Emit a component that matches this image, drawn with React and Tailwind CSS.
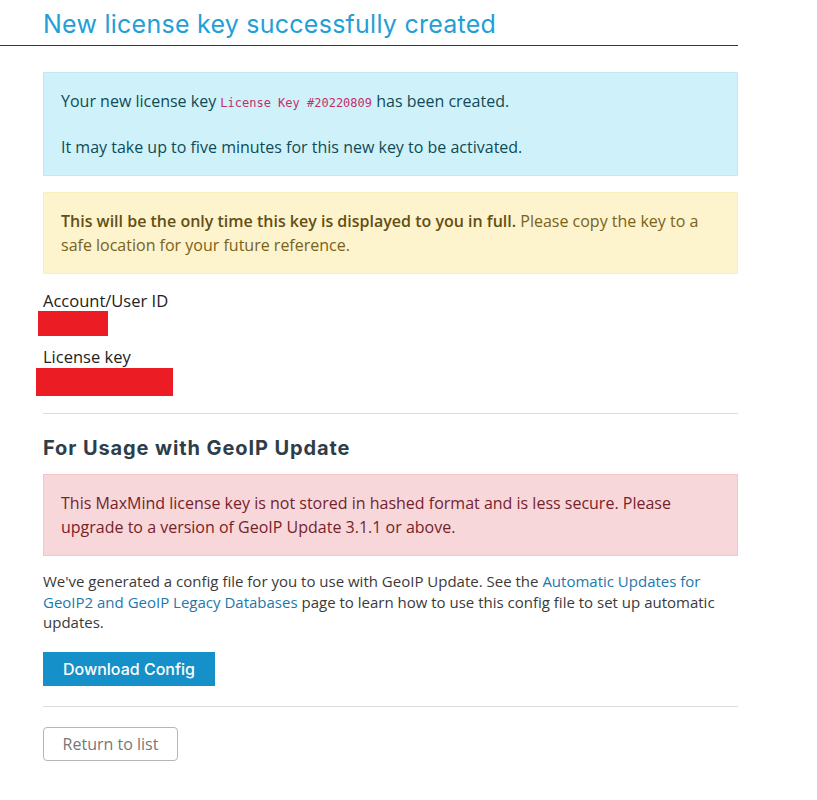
export default function App() {
  return (
    <div className="w-[817px] min-h-[800px] bg-white font-['Open_Sans',sans-serif] text-[#333]">
      <div className="w-[738px] border-b border-[#2d3e4a] pt-[7px] pb-[4px]">
        <h1 className="pl-[43px] font-['Inter',sans-serif] text-[25px] leading-[34px] text-[#239fd7] tracking-[0.25px]">
          New license key successfully created
        </h1>
      </div>

      <div className="ml-[43px] w-[695px] pt-[26px]">
        <div className="bg-[#cff2fa] border border-[#bfeaf4] px-[17px] py-[16px] text-[16px] leading-[24px] text-[#0f4a56]">
          <p>
            Your new license key{' '}
            <code className="font-['DejaVu_Sans_Mono',monospace] text-[12px] text-[#c2306b]">License Key #20220809</code>{' '}
            has been created.
          </p>
          <p className="mt-[20px]">It may take up to five minutes for this new key to be activated.</p>
        </div>

        <div className="mt-[16px] bg-[#fdf3cd] border border-[#fbeebf] px-[17px] py-[16px] text-[16px] leading-[24px] text-[#79621a]">
          <strong className="font-semibold text-[#634f12]">This will be the only time this key is displayed to you in full.</strong>{' '}
          Please copy the key to a safe location for your future reference.
        </div>

        <div className="mt-[16px] text-[16.5px] leading-[22px] text-[#222]">
          <div>Account/User ID</div>
          <div className="-ml-[5px] mt-[-1px] w-[70px] h-[25px] bg-[#ec1c24]" />
          <div className="mt-[10px]">License key</div>
          <div className="-ml-[7px] w-[137px] h-[28px] bg-[#ec1c24]" />
        </div>

        <div className="mt-[17px] border-t border-[#dcdcdc]" />

        <h2 className="mt-[20px] font-['Inter',sans-serif] font-bold text-[20px] leading-[28px] tracking-[0.9px] text-[#2d3e4a]">
          For Usage with GeoIP Update
        </h2>

        <div className="mt-[12px] bg-[#f8d7da] border border-[#f3c6cb] px-[17px] py-[16px] text-[16px] leading-[24px] text-[#74232b]">
          This MaxMind license key is not stored in hashed format and is less secure. Please upgrade to a version of GeoIP Update 3.1.1 or above.
        </div>

        <p className="mt-[15px] text-[15px] leading-[20.5px] text-[#3a3a3a]">
          We've generated a config file for you to use with GeoIP Update. See the{' '}
          <a className="text-[#1c78ad]">Automatic Updates for GeoIP2 and GeoIP Legacy Databases</a>{' '}
          page to learn how to use this config file to set up automatic updates.
        </p>

        <button className="mt-[19px] h-[34px] w-[172px] bg-[#1690c8] text-white font-['Inter',sans-serif] font-medium text-[16px]">
          Download Config
        </button>

        <div className="mt-[20px] border-t border-[#dcdcdc]" />

        <button className="mt-[20px] h-[34px] w-[135px] border border-[#b5b5b5] rounded-[4px] bg-white text-[16px] text-[#777]">
          Return to list
        </button>
      </div>
    </div>
  )
}
